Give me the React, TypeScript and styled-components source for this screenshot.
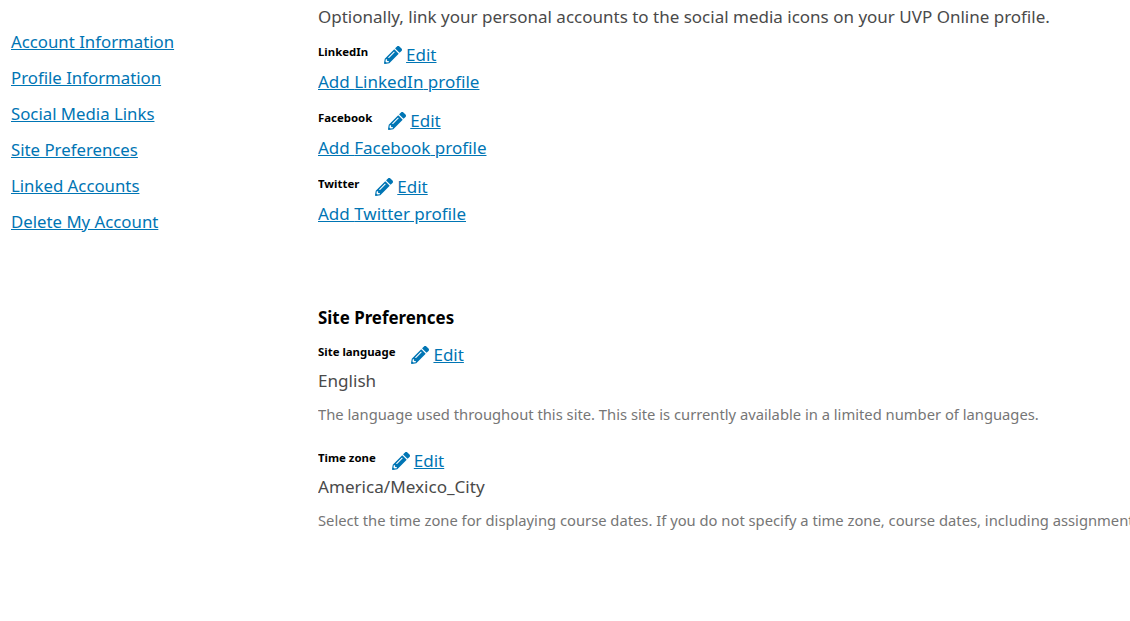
import React from 'react'
import styled, { createGlobalStyle } from 'styled-components'
import { FaPencilAlt } from 'react-icons/fa'

const GlobalStyle = createGlobalStyle`
  html, body {
    margin: 0;
    padding: 0;
    background: #fff;
    overflow: hidden;
  }
  body {
    font-family: "Noto Sans", "Open Sans", sans-serif;
    color: #4a4a4a;
  }
`

const Page = styled.div`
  display: flex;
  width: 1130px;
  height: 621px;
  overflow: hidden;
`

const Sidebar = styled.nav`
  flex: 0 0 318px;
  display: flex;
  flex-direction: column;
  gap: 10px;
  padding: 29px 0 0 11px;
  box-sizing: border-box;
`

const NavLink = styled.a`
  font-size: 16.8px;
  line-height: 26px;
  color: #0075b4;
  text-decoration: underline;
`

const Main = styled.main`
  flex: 1;
  min-width: 0;
  overflow: hidden;
`

const Intro = styled.p`
  margin: 4px 0 0;
  font-size: 17px;
  line-height: 26px;
  white-space: nowrap;
`

const Field = styled.div<{ $top?: number }>`
  margin-top: ${(p) => p.$top ?? 11}px;
`

const LabelRow = styled.div`
  display: flex;
  align-items: flex-start;
  height: 27px;
`

const Label = styled.span`
  font-size: 11.4px;
  line-height: 22px;
  font-weight: 700;
  color: #000;
  margin-right: 16px;
`

const EditLink = styled.a`
  display: inline-flex;
  align-items: center;
  font-size: 17px;
  line-height: 26px;
  color: #0075b4;
  text-decoration: underline;
  padding-top: 1px;

  svg {
    width: 18px;
    height: 18px;
    margin-right: 4px;
  }
`

const AddLink = styled.a`
  display: block;
  font-size: 17px;
  line-height: 28px;
  color: #0075b4;
  text-decoration: underline;
`

const Value = styled.div`
  font-size: 17.1px;
  line-height: 26px;
`

const Description = styled.div`
  margin-top: 8px;
  font-size: 14.75px;
  line-height: 24px;
  color: #767676;
  white-space: nowrap;
`

const SectionTitle = styled.h2`
  margin: 77px 0 0;
  font-size: 16.9px;
  line-height: 26px;
  font-weight: 700;
  color: #000;
`

const links = [
  'Account Information',
  'Profile Information',
  'Social Media Links',
  'Site Preferences',
  'Linked Accounts',
  'Delete My Account',
]

const socials = ['LinkedIn', 'Facebook', 'Twitter']

function Edit({ label }: { label: string }) {
  return (
    <LabelRow>
      <Label>{label}</Label>
      <EditLink href="#">
        <FaPencilAlt />
        Edit
      </EditLink>
    </LabelRow>
  )
}

export default function App() {
  return (
    <>
      <GlobalStyle />
      <Page>
        <Sidebar>
          {links.map((l) => (
            <NavLink key={l} href="#">{l}</NavLink>
          ))}
        </Sidebar>
        <Main>
          <Intro>Optionally, link your personal accounts to the social media icons on your UVP Online profile.</Intro>
          {socials.map((s) => (
            <Field key={s}>
              <Edit label={s} />
              <AddLink href="#">Add {s} profile</AddLink>
            </Field>
          ))}
          <SectionTitle>Site Preferences</SectionTitle>
          <Field $top={10}>
            <Edit label="Site language" />
            <Value>English</Value>
            <Description>The language used throughout this site. This site is currently available in a limited number of languages.</Description>
          </Field>
          <Field $top={21}>
            <Edit label="Time zone" />
            <Value>America/Mexico_City</Value>
            <Description>Select the time zone for displaying course dates. If you do not specify a time zone, course dates, including assignment deadlines, will be displayed in your browser's local time zone.</Description>
          </Field>
        </Main>
      </Page>
    </>
  )
}
